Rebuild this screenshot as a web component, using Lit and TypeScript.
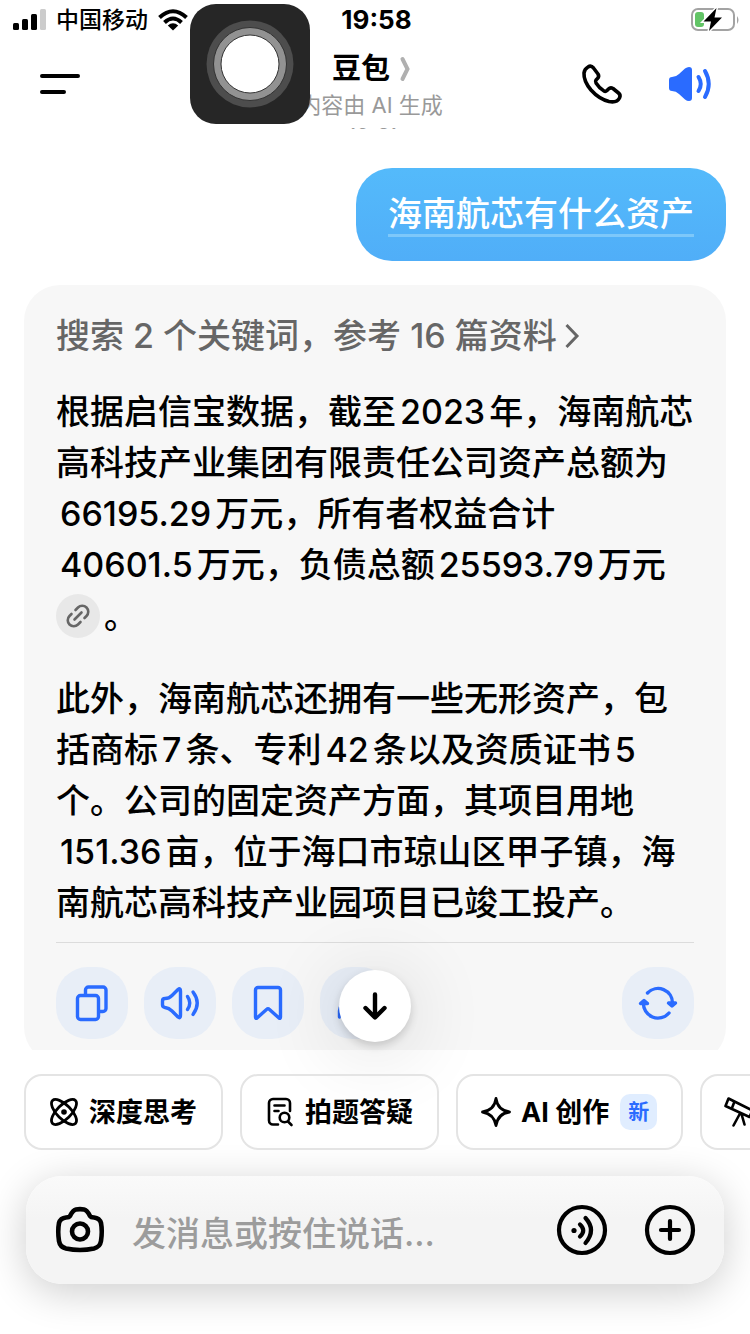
import { LitElement, html, css } from "lit";
import { customElement } from "lit/decorators.js";

const copyIcon = html`<svg width="72" height="72" viewBox="0 0 72 72" fill="none" stroke="currentColor" stroke-width="3.400" stroke-linejoin="round">
  <rect x="21.500" y="28.500" width="21" height="24" rx="3" />
  <path d="M29.500 28V23a3 3 0 0 1 3-3H47a3 3 0 0 1 3 3v18.500a3 3 0 0 1-3 3h-4" />
</svg>`;

const speakIcon = html`<svg width="72" height="72" viewBox="0 0 72 72" fill="none" stroke="currentColor" stroke-width="3.400" stroke-linecap="round" stroke-linejoin="round">
  <path d="M18.500 34Q18.500 31.500 21 31.500Q25 31.500 28 28.500L34 22.500Q36.500 20.500 36.500 24V48Q36.500 52 34 50L28 44Q25 41 21 40.500Q18.500 40 18.500 38Z" />
  <path d="M43.500 29.500q4.500 6.500 0 13M49 25q8.500 11 0 22.500" />
</svg>`;

const bookmarkIcon = html`<svg width="72" height="72" viewBox="0 0 72 72" fill="none" stroke="currentColor" stroke-width="3.400" stroke-linejoin="round">
  <path d="M23.500 23a2.500 2.500 0 0 1 2.500-2.500h20a2.500 2.500 0 0 1 2.500 2.500v27q0 2-1.500 1L37.500 42.500q-1.500-1.300-3 0L25 51q-1.500 1-1.500-1z" />
</svg>`;

const shareIcon = html`<svg width="72" height="72" viewBox="0 0 72 72" fill="none" stroke="currentColor" stroke-width="3.400" stroke-linejoin="round" stroke-linecap="round">
  <path d="M19.500 50v-6q2-14 18-14v-8l14 13-14 13v-8q-12 0-18 10z" />
</svg>`;

const refreshIcon = html`<svg width="72" height="72" viewBox="0 0 72 72" fill="none" stroke="currentColor" stroke-width="3.400" stroke-linecap="round" stroke-linejoin="round">
  <path d="M25.500 26A14.500 14.500 0 0 1 50.500 36.500M47 46A14.500 14.500 0 0 1 21.500 35.500" />
  <path fill="currentColor" d="M46.500 36h7L50 39zM18.500 36.500h7L22 33.500z" />
</svg>`;

const chipIcons = {
  atom: html`<svg width="28" height="28" viewBox="0 0 28 28" fill="none" stroke="currentColor" stroke-width="2.800">
    <ellipse cx="14" cy="14" rx="16.200" ry="7" transform="rotate(45 14 14)" />
    <ellipse cx="14" cy="14" rx="16.200" ry="7" transform="rotate(-45 14 14)" />
    <circle cx="14" cy="14" r="2.800" fill="currentColor" stroke="none" />
  </svg>`,
  page: html`<svg width="28" height="28" viewBox="0 0 28 28" fill="none" stroke="currentColor" stroke-width="2.600" stroke-linecap="round">
    <path d="M12 26.500H7a4 4 0 0 1-4-4V5a4 4 0 0 1 4-4h13a4 4 0 0 1 4 4v8M8.500 7.500h10M8.500 13h4" />
    <circle cx="18.500" cy="19.500" r="4.800" /><path d="M22 23.500l3.500 3.500" />
  </svg>`,
  spark: html`<svg width="28" height="28" viewBox="1 1 28 28" fill="none" stroke="currentColor" stroke-width="2.800" stroke-linejoin="round">
    <path d="M15 1.500Q16.500 13 28.500 15Q17 16.500 15 28.500Q13 17 1.500 15Q13.500 13 15 1.500Z" />
  </svg>`,
  telescope: html`<svg width="32" height="32" viewBox="2 0 32 32" fill="none" stroke="currentColor" stroke-width="2.600" stroke-linecap="round" stroke-linejoin="round">
    <path d="M4.500 2.500l24 12-3 6.500-24-11zM10.500 5.500l-2.500 6.500M16 17.500L9.500 29.500M17.500 18L20.500 28.500" />
  </svg>`,
};

@customElement("app-root")
export class AppRoot extends LitElement {
  static styles = css`
    :host {
      display: flex;
      flex-direction: column;
      position: relative;
      height: 100vh;
      overflow: hidden;
      background: #fff;
      color: #000;
      font-family: Inter, "Noto Sans CJK SC", sans-serif;
      font-weight: 500;
    }
    * { box-sizing: border-box; }
    svg { display: block; flex: none; overflow: visible; }
    button {
      display: flex;
      align-items: center;
      justify-content: center;
      padding: 0;
      border: 0;
      background: none;
      color: inherit;
      font: inherit;
      flex: none;
    }
    p { margin: 0; }
    .status {
      display: grid;
      grid-template-columns: 1fr auto 1fr;
      align-items: center;
      height: 40px;
      padding: 0 10px 0 13px;
      font-size: 23px;
      line-height: 40px;
    }
    .carrier { display: flex; align-items: center; gap: 10px; }
    .clock { font-weight: 700; font-size: 26px; }
    .power { justify-self: end; }
    .header {
      display: grid;
      grid-template-columns: 1fr auto 1fr;
      align-items: center;
      height: 88px;
      padding: 0 38px 0 30px;
    }
    .menu { justify-self: start; padding: 0 10px; }
    .title { display: flex; flex-direction: column; align-items: center; gap: 2px; }
    .name { margin: 0; display: flex; align-items: center; gap: 10px; font-size: 29px; line-height: 40px; font-weight: 700; }
    .sub { font-size: 22px; line-height: 28px; color: #999; font-weight: 400; white-space: nowrap; }
    .tools { display: flex; gap: 46px; justify-self: end; }
    .chat {
      flex: 1;
      min-height: 0;
      overflow: hidden;
      display: flex;
      flex-direction: column;
      padding: 0 24px;
    }
    .time { flex: none; text-align: center; font-size: 22px; line-height: 30px; margin-top: -22px; color: #999; }
    .bubble {
      flex: none;
      align-self: flex-end;
      margin-top: 32px;
      padding: 26px 32px 24px;
      border-radius: 36px;
      background: linear-gradient(#54bafb, #50aef8);
      color: #fff;
      font-size: 34px;
      line-height: 40px;
    }
    .query { display: block; border-bottom: 3px solid #7dc8fa; }
    .card { flex: none; margin-top: 24px; padding: 29px 32px 24px; border-radius: 36px; background: #f7f7f7; }
    .refs { gap: 8px; color: #666; font-size: 34px; line-height: 44px; }
    .answer { margin-top: 28px; font-size: 34px; line-height: 51px; }
    .answer + .answer { margin-top: 32px; }
    .line { display: block; white-space: nowrap; }
    .num { margin: 0 4px; }
    .cite {
      display: inline-flex;
      width: 44px;
      height: 44px;
      margin-right: 4px;
      border-radius: 50%;
      background: #e8e8e8;
      color: #666;
      vertical-align: baseline;
    }
    .actions { display: flex; gap: 16px; margin-top: 14px; padding-top: 24px; border-top: 1px solid #dcdcdc; }
    .act { width: 72px; height: 72px; border-radius: 32px; background: #e8eef7; color: #2a6bff; }
    .act:last-child { margin-left: auto; }
    .dock { flex: none; position: relative; }
    .down {
      position: absolute;
      left: 50%;
      bottom: 100%;
      width: 72px;
      height: 72px;
      margin: 0 0 8px -36px;
      border-radius: 50%;
      background: #fff;
      box-shadow: 0 4px 8px rgba(0, 0, 0, .16), 0 8px 80px rgba(0, 0, 0, .16);
    }
    .chips { display: flex; gap: 17px; padding: 24px 24px 0; position: relative; }
    .chip {
      gap: 11px;
      height: 76px;
      padding: 0 24px;
      border: 2px solid #e4e4e4;
      border-radius: 18px;
      font-size: 27px;
      font-weight: 700;
      white-space: nowrap;
    }
    .label { padding-bottom: 3px; }
    .tag { padding: 0 8px; border-radius: 10px; background: #e0edff; color: #2a6bff; font-size: 21px; line-height: 36px; }
    .bar {
      display: flex;
      align-items: center;
      margin: 26px 26px 50px;
      height: 108px;
      padding: 0 28px 0 30px;
      border-radius: 36px;
      background: linear-gradient(#fafafa, #f4f4f4 40%);
      box-shadow: 0 8px 40px rgba(0, 0, 0, .2);
    }
    .field {
      flex: 1;
      min-width: 0;
      margin: 0 28px;
      padding: 8px 0 0;
      border: 0;
      background: none;
      font: inherit;
      font-size: 34px;
      line-height: 48px;
      outline: 0;
    }
    .field::placeholder { color: #9c9c9c; opacity: 1; }
    .ends { display: flex; gap: 36px; }
    .assist { position: absolute; left: 190px; top: 4px; width: 120px; height: 120px; border-radius: 26px; background: #262626; }
  `;

  render() {
    return html`
      <div class="status">
        <div class="carrier">
          <svg width="33" height="22" viewBox="0 0 33 22">
            <rect x="0" y="14" width="6" height="7" rx="1.500" /><rect x="9" y="10" width="6" height="11" rx="1.500" />
            <rect x="18" y="5" width="6" height="16" rx="1.500" /><rect x="27" y="0" width="6" height="21" rx="1.500" fill="#ccc" />
          </svg>
          <span>中国移动</span>
          <svg width="30" height="22" viewBox="0 0 30 22" fill="none" stroke="#000" stroke-width="4">
            <path d="M1.500 8.500Q15-4 28.500 8.500M6.500 13.500Q15 5.500 23.500 13.500" />
            <path d="M15 21.500L9.800 16.500Q15 12 20.200 16.500Z" fill="#000" stroke="none" />
          </svg>
        </div>
        <span class="clock">19:58</span>
        <svg class="power" width="49" height="24" viewBox="0 0 49 24">
          <rect x="1" y="1" width="42" height="21" rx="6" fill="#fff" stroke="#a3a3a3" stroke-width="2" />
          <path d="M46 8q3 4 0 8z" fill="#a3a3a3" />
          <rect x="4" y="4" width="9" height="15" rx="3" fill="#62c466" />
          <path d="M25.500 0L12.500 13.500H20L18 23L31 9.500H23.500Z" fill="#000" stroke="#fff" stroke-width="3" paint-order="stroke" />
        </svg>
      </div>
      <header class="header">
        <button class="menu" aria-label="菜单">
          <svg width="40" height="24" viewBox="0 0 40 24" stroke="#000" stroke-width="4" stroke-linecap="round"><path d="M2 4H38M2 20H24" /></svg>
        </button>
        <div class="title">
          <h1 class="name">豆包
            <svg width="10" height="24" viewBox="0 0 10 24" fill="none" stroke="#b0b0b0" stroke-width="4" stroke-linecap="round"><path d="M2.500 2L7.500 12L2.500 22" /></svg>
          </h1>
          <span class="sub">内容由 AI 生成</span>
        </div>
        <div class="tools">
          <button aria-label="通话">
            <svg width="40" height="40" viewBox="0 0 40 40" fill="none" stroke="#000" stroke-width="3.600" stroke-linejoin="round">
              <path d="M6 3Q9 1 11.500 4L16 10Q17.500 12.500 15.500 14.500L14 16Q13 17.500 14 19Q17.500 24.500 22 27Q23.500 28 25 26.500L26.500 25Q28.500 23 31 24.500L36.500 29Q39 31 37.500 34Q35 39 27 37.500Q17 35 9 26Q1.500 17 2 9Q2.500 5 6 3Z" />
            </svg>
          </button>
          <button aria-label="朗读">
            <svg width="44" height="36" viewBox="0 0 44 36" fill="none" stroke="#2a6bff" stroke-width="4" stroke-linecap="round">
              <path stroke="none" fill="#2a6bff" d="M1 14Q1 11 4 11Q8 11 11 8L17 2.500Q19 1 21 1Q24 1 24 4V32Q24 35 21 35Q19 35 17 33.500L11 28Q8 25 4 25Q1 25 1 22Z" />
              <path d="M30.500 11q4.500 7 0 14M37 5q7.500 13 0 26" />
            </svg>
          </button>
        </div>
      </header>
      <main class="chat">
        <span class="time">19:57</span>
        <p class="bubble"><span class="query">海南航芯有什么资产</span></p>
        <section class="card">
          <button class="refs">搜索 2 个关键词，参考 16 篇资料
            <svg width="14" height="24" viewBox="0 0 14 24" fill="none" stroke="currentColor" stroke-width="3"><path d="M1.500 1L12 12L1.500 23" /></svg>
          </button>
          <p class="answer">
            <span class="line">根据启信宝数据，截至<span class="num">2023</span>年，海南航芯</span>
            <span class="line">高科技产业集团有限责任公司资产总额为</span>
            <span class="line"><span class="num">66195.29</span>万元，所有者权益合计</span>
            <span class="line"><span class="num">40601.5</span>万元，负债总额<span class="num">25593.79</span>万元</span>
            <span class="line"><button class="cite" aria-label="来源">
              <svg width="24" height="24" viewBox="0 0 24 24" fill="none" stroke="currentColor" stroke-width="2.600" stroke-linecap="round">
                <path d="M8.500 15.500L15.500 8.500M9.500 6L12 3.500A5.800 5.800 0 0 1 20.500 12L18.500 14M5.500 10L3.500 12A5.800 5.800 0 0 0 12 20.500L14.500 18" />
              </svg></button>。</span>
          </p>
          <p class="answer">
            <span class="line">此外，海南航芯还拥有一些无形资产，包</span>
            <span class="line">括商标<span class="num">7</span>条、专利<span class="num">42</span>条以及资质证书<span class="num">5</span></span>
            <span class="line">个。公司的固定资产方面，其项目用地</span>
            <span class="line"><span class="num">151.36</span>亩，位于海口市琼山区甲子镇，海</span>
            <span class="line">南航芯高科技产业园项目已竣工投产。</span>
          </p>
          <div class="actions">
            <button class="act" aria-label="复制">${copyIcon}</button>
            <button class="act" aria-label="播放">${speakIcon}</button>
            <button class="act" aria-label="收藏">${bookmarkIcon}</button>
            <button class="act" aria-label="分享">${shareIcon}</button>
            <button class="act" aria-label="重新生成">${refreshIcon}</button>
          </div>
        </section>
      </main>
      <footer class="dock">
        <button class="down" aria-label="回到底部">
          <svg width="24" height="28" viewBox="0 0 24 28" fill="none" stroke="#000" stroke-width="4.400" stroke-linecap="round" stroke-linejoin="round"><path d="M12 2.500V25M2.500 16L12 25.500L21.500 16" /></svg>
        </button>
        <nav class="chips">
          <button class="chip">${chipIcons.atom}<span class="label">深度思考</span></button>
          <button class="chip">${chipIcons.page}<span class="label">拍题答疑</span></button>
          <button class="chip">${chipIcons.spark}<span class="label">AI 创作</span><span class="tag">新</span></button>
          <button class="chip" aria-label="探索">${chipIcons.telescope}</button>
        </nav>
        <div class="bar">
          <button aria-label="拍照">
            <svg width="48" height="46" viewBox="0 0 48 46" fill="none" stroke="#000" stroke-width="4.600" stroke-linejoin="round">
              <path d="M14 9Q17 3 20 2.500Q24 1.800 28 2.500Q31 3 34 9Q35 10.500 38 10.500Q43.500 11 45 16Q46.500 24 45 34Q44 40 38 41.500Q24 44.500 10 41.500Q4 40 3 34Q1.500 24 3 16Q4.500 11 10 10.500Q13 10.500 14 9Z" />
              <circle cx="24" cy="24.500" r="8" />
            </svg>
          </button>
          <input class="field" aria-label="消息" placeholder="发消息或按住说话..." />
          <div class="ends">
            <button aria-label="语音">
              <svg width="52" height="52" viewBox="0 0 52 52" fill="none" stroke="#000" stroke-width="4.200" stroke-linecap="round">
                <circle cx="26" cy="26" r="23" /><circle cx="18" cy="26.500" r="2.600" fill="#000" stroke="none" />
                <path d="M24 20.500q6.500 6 0 12M29.500 14q11 12 0 25" />
              </svg>
            </button>
            <button aria-label="更多">
              <svg width="52" height="52" viewBox="0 0 52 52" fill="none" stroke="#000" stroke-width="4.200" stroke-linecap="round">
                <circle cx="26" cy="26" r="23" /><path d="M17 26H35M26 17V35" />
              </svg>
            </button>
          </div>
        </div>
      </footer>
      <button class="assist" aria-label="辅助触控">
        <svg width="88" height="88" viewBox="0 0 88 88">
          <circle cx="44" cy="44" r="43.500" fill="#4d4d4d" />
          <circle cx="44" cy="44" r="36.500" fill="#929292" stroke="#333" />
          <circle cx="44" cy="44" r="29" fill="#fff" stroke="#333" />
        </svg>
      </button>
    `;
  }
}
